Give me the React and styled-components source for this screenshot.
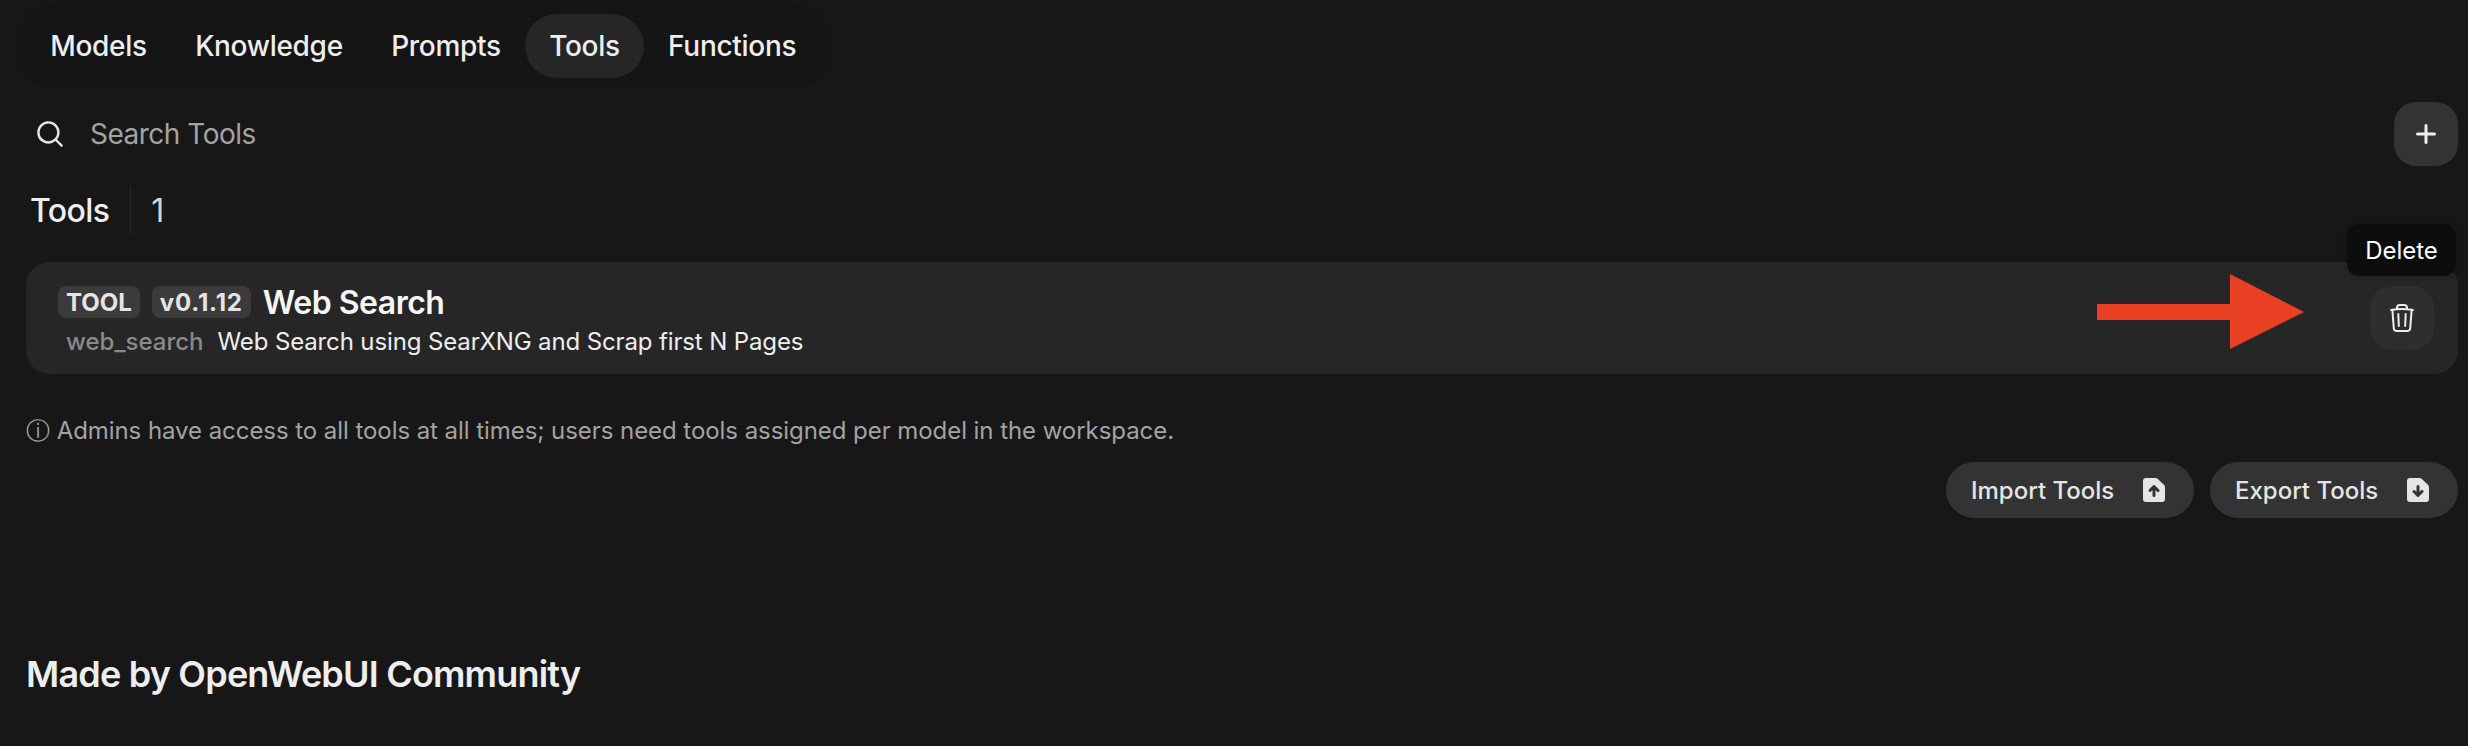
import React from 'react';
import styled, { createGlobalStyle } from 'styled-components';

const GlobalStyle = createGlobalStyle`
  html, body {
    margin: 0;
    padding: 0;
    background: #171717;
  }
  body {
    font-family: 'Inter', 'Liberation Sans', sans-serif;
    color: #eeeeee;
  }
`;

const Page = styled.div`
  display: flex;
  flex-direction: column;
  box-sizing: border-box;
  width: 2468px;
  height: 746px;
  padding: 14px 10px 0 26px;
  overflow: hidden;
`;

const TabBar = styled.nav`
  display: flex;
  align-self: flex-start;
  margin: -9px 0 -9px -6px;
  padding: 9px 8px 9px 6px;
  border-radius: 32px;
  background: #151515;
`;

const Tab = styled.div`
  display: flex;
  align-items: center;
  height: 64px;
  padding: 0 24.2px;
  border-radius: 32px;
  font-size: 28px;
  font-weight: 500;
  letter-spacing: -0.3px;
  color: #eeeeee;
  background: ${(p) => (p.$active ? '#262626' : 'transparent')};
`;

const SearchRow = styled.div`
  display: flex;
  align-items: center;
  gap: 24px;
  height: 64px;
  margin-top: 24px;
  padding-left: 8px;
`;

const SearchText = styled.div`
  flex: 1;
  font-size: 28px;
  letter-spacing: -0.5px;
  color: #a3a3a3;
`;

const IconButton = styled.div`
  display: flex;
  align-items: center;
  justify-content: center;
  flex-shrink: 0;
  width: 64px;
  height: 64px;
  border-radius: 22px;
  color: #eeeeee;
  background: ${(p) => (p.$ghost ? '#2e2e2e' : '#333333')};
`;

const SectionHead = styled.div`
  display: flex;
  align-items: center;
  height: 48px;
  margin-top: 20px;
  padding-left: 4px;
  font-size: 32px;
  font-weight: 500;
  letter-spacing: -0.6px;
`;

const Divider = styled.div`
  width: 1px;
  height: 48px;
  margin: 0 20px 0 21px;
  background: #2a2a2a;
`;

const Count = styled.span`
  font-weight: 400;
  color: #d4d4d4;
`;

const ToolCard = styled.div`
  position: relative;
  display: flex;
  align-items: center;
  justify-content: space-between;
  box-sizing: border-box;
  height: 112px;
  margin-top: 28px;
  padding: 0 24px 0 32px;
  border-radius: 24px;
  background: #262626;
`;

const CardBody = styled.div`
  display: flex;
  flex-direction: column;
  gap: 8px;
  padding-top: 8px;
`;

const TitleRow = styled.div`
  display: flex;
  align-items: center;
  gap: 12px;
  height: 32px;
`;

const Badge = styled.span`
  display: flex;
  align-items: center;
  height: 32px;
  padding: 0 8px;
  border-radius: 8px;
  font-size: 24px;
  font-weight: 700;
  letter-spacing: ${(p) => (p.$wide ? '0.8px' : '0')};
  color: #e5e5e5;
  background: #3b3b3b;
`;

const ToolName = styled.span`
  font-size: 32px;
  font-weight: 600;
  letter-spacing: -0.5px;
  color: #f5f5f5;
`;

const MetaRow = styled.div`
  display: flex;
  gap: 14px;
  padding-left: 8px;
  font-size: 24px;
  line-height: 32px;
`;

const ToolId = styled.span`
  font-weight: 500;
  color: #8a8a8a;
`;

const Description = styled.span`
  letter-spacing: -0.13px;
  color: #eeeeee;
`;

const Tooltip = styled.div`
  position: absolute;
  top: -38px;
  right: 2px;
  display: flex;
  align-items: center;
  justify-content: center;
  width: 109px;
  height: 52px;
  border-radius: 12px;
  font-size: 24px;
  color: #ffffff;
  background: #0d0d0d;
  box-shadow: 0 2px 6px rgba(0, 0, 0, 0.18);
`;

const Arrow = styled.svg`
  position: absolute;
  top: 12px;
  right: 154px;
`;

const Notice = styled.div`
  margin-top: 41px;
  font-size: 24px;
  line-height: 32px;
  letter-spacing: -0.06px;
  color: #a3a3a3;
`;

const ActionRow = styled.div`
  display: flex;
  justify-content: flex-end;
  gap: 16px;
  margin-top: 15px;
`;

const ActionButton = styled.div`
  display: flex;
  align-items: center;
  justify-content: space-between;
  box-sizing: border-box;
  width: 248px;
  height: 56px;
  padding: 0 24px 0 25px;
  border-radius: 28px;
  font-size: 24px;
  font-weight: 500;
  color: #e5e5e5;
  background: #333333;
`;

const CommunityTitle = styled.h2`
  margin: 134px 0 0;
  font-size: 36px;
  line-height: 44px;
  font-weight: 600;
  letter-spacing: -0.8px;
  color: #eeeeee;
`;

const SearchIcon = () => (
  <svg width="32" height="32" viewBox="0 0 20 20" fill="#e5e5e5">
    <path
      fillRule="evenodd"
      clipRule="evenodd"
      d="M9 3.5a5.5 5.5 0 100 11 5.5 5.5 0 000-11zM2 9a7 7 0 1112.452 4.391l3.328 3.329a.75.75 0 11-1.06 1.06l-3.329-3.328A7 7 0 012 9z"
    />
  </svg>
);

const PlusIcon = () => (
  <svg width="32" height="32" viewBox="0 0 16 16" fill="currentColor">
    <path d="M8.75 3.75a.75.75 0 0 0-1.5 0v3.5h-3.5a.75.75 0 0 0 0 1.5h3.5v3.5a.75.75 0 0 0 1.5 0v-3.5h3.5a.75.75 0 0 0 0-1.5h-3.5v-3.5Z" />
  </svg>
);

const TrashIcon = () => (
  <svg width="32" height="32" viewBox="0 0 24 24" fill="none" stroke="currentColor" strokeWidth="1.5" strokeLinecap="round" strokeLinejoin="round">
    <path d="m14.74 9-.346 9m-4.788 0L9.26 9m9.968-3.21c.342.052.682.107 1.022.166m-1.022-.165L18.16 19.673a2.25 2.25 0 0 1-2.244 2.077H8.084a2.25 2.25 0 0 1-2.244-2.077L4.772 5.79m14.456 0a48.108 48.108 0 0 0-3.478-.397m-12 .562c.34-.059.68-.114 1.022-.165m0 0a48.11 48.11 0 0 1 3.478-.397m7.5 0v-.916c0-1.18-.91-2.164-2.09-2.201a51.964 51.964 0 0 0-3.32 0c-1.18.037-2.09 1.022-2.09 2.201v.916m7.5 0a48.667 48.667 0 0 0-7.5 0" />
  </svg>
);

const FileUpIcon = () => (
  <svg width="32" height="32" viewBox="0 0 16 16" fill="currentColor">
    <path
      fillRule="evenodd"
      clipRule="evenodd"
      d="M4 2a1.5 1.5 0 0 0-1.5 1.5v9A1.5 1.5 0 0 0 4 14h8a1.5 1.5 0 0 0 1.5-1.5V6.621a1.5 1.5 0 0 0-.44-1.06L9.94 2.439A1.5 1.5 0 0 0 8.878 2H4Zm4 9.5a.75.75 0 0 1-.75-.75V8.06l-.72.72a.75.75 0 0 1-1.06-1.06l2-2a.75.75 0 0 1 1.06 0l2 2a.75.75 0 1 1-1.06 1.06l-.72-.72v2.69a.75.75 0 0 1-.75.75Z"
    />
  </svg>
);

const FileDownIcon = () => (
  <svg width="32" height="32" viewBox="0 0 16 16" fill="currentColor">
    <path
      fillRule="evenodd"
      clipRule="evenodd"
      d="M4 2a1.5 1.5 0 0 0-1.5 1.5v9A1.5 1.5 0 0 0 4 14h8a1.5 1.5 0 0 0 1.5-1.5V6.621a1.5 1.5 0 0 0-.44-1.06L9.94 2.439A1.5 1.5 0 0 0 8.878 2H4Zm4 3.5a.75.75 0 0 1 .75.75v2.69l.72-.72a.75.75 0 1 1 1.06 1.06l-2 2a.75.75 0 0 1-1.06 0l-2-2a.75.75 0 0 1 1.06-1.06l.72.72V6.25A.75.75 0 0 1 8 5.5Z"
    />
  </svg>
);

const tabs = ['Models', 'Knowledge', 'Prompts', 'Tools', 'Functions'];

const App = () => {
  return (
    <Page>
      <GlobalStyle />
      <TabBar>
        {tabs.map((t) => (
          <Tab key={t} $active={t === 'Tools'}>{t}</Tab>
        ))}
      </TabBar>

      <SearchRow>
        <SearchIcon />
        <SearchText>Search Tools</SearchText>
        <IconButton><PlusIcon /></IconButton>
      </SearchRow>

      <SectionHead>
        Tools
        <Divider />
        <Count>1</Count>
      </SectionHead>

      <ToolCard>
        <CardBody>
          <TitleRow>
            <Badge>TOOL</Badge>
            <Badge $wide>v0.1.12</Badge>
            <ToolName>Web Search</ToolName>
          </TitleRow>
          <MetaRow>
            <ToolId>web_search</ToolId>
            <Description>Web Search using SearXNG and Scrap first N Pages</Description>
          </MetaRow>
        </CardBody>
        <IconButton $ghost><TrashIcon /></IconButton>
        <Tooltip>Delete</Tooltip>
        <Arrow width="207" height="76" viewBox="0 0 207 76">
          <path d="M0 30H133V0L207 38L133 75V46H0Z" fill="#e94023" />
        </Arrow>
      </ToolCard>

      <Notice>ⓘ Admins have access to all tools at all times; users need tools assigned per model in the workspace.</Notice>

      <ActionRow>
        <ActionButton>Import Tools <FileUpIcon /></ActionButton>
        <ActionButton>Export Tools <FileDownIcon /></ActionButton>
      </ActionRow>

      <CommunityTitle>Made by OpenWebUI Community</CommunityTitle>
    </Page>
  );
};

export default App;
